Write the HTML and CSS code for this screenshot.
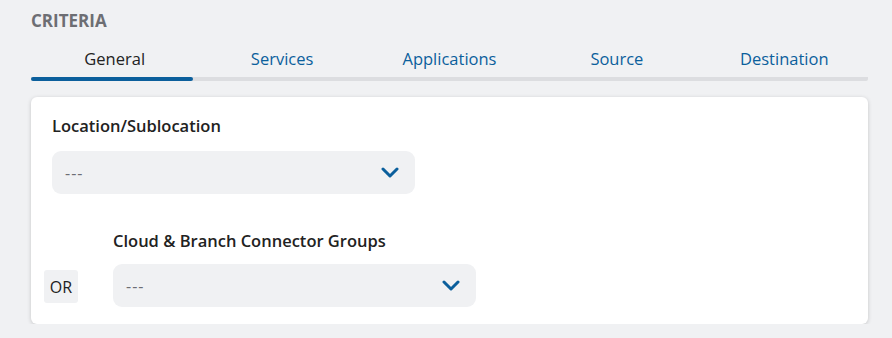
FILE: index.html
```html
<!DOCTYPE html>
<html lang="en">
<head>
    <meta charset="UTF-8">
    <meta name="viewport" content="width=device-width, initial-scale=1.0">
    <title>Criteria</title>
    <link rel="stylesheet" href="styles.css">
</head>
<body>
    <div class="criteria">
        <h2 class="section-title">CRITERIA</h2>
        <div class="tabs">
            <div class="tab active">General</div>
            <div class="tab">Services</div>
            <div class="tab">Applications</div>
            <div class="tab">Source</div>
            <div class="tab">Destination</div>
        </div>
        <div class="card">
            <div class="field">
                <label class="field-label">Location/Sublocation</label>
                <div class="select">
                    <span class="placeholder">---</span>
                    <svg class="chevron" width="18" height="12" viewBox="0 0 18 12"><path d="M2 2l7 7 7-7" fill="none" stroke="#0b5f9c" stroke-width="3" stroke-linecap="round" stroke-linejoin="round"/></svg>
                </div>
            </div>
            <div class="or-row">
                <div class="or-badge">OR</div>
                <div class="field">
                    <label class="field-label">Cloud &amp; Branch Connector Groups</label>
                    <div class="select">
                        <span class="placeholder">---</span>
                        <svg class="chevron" width="18" height="12" viewBox="0 0 18 12"><path d="M2 2l7 7 7-7" fill="none" stroke="#0b5f9c" stroke-width="3" stroke-linecap="round" stroke-linejoin="round"/></svg>
                    </div>
                </div>
            </div>
        </div>
    </div>
</body>
</html>
```

FILE: styles.css
```css
body {
    font-family: "Open Sans", "Noto Sans", sans-serif;
    background-color: #f0f1f3;
    margin: 0;
    color: #222;
}
.criteria {
    padding: 10px 24px 0 31px;
}
.section-title {
    margin: 0;
    font-size: 17px;
    font-weight: 700;
    color: #6d6e73;
    line-height: 22px;
}
.tabs {
    display: grid;
    grid-template-columns: repeat(5, 1fr);
    margin-top: 16px;
    border-bottom: 4px solid #dcdde0;
    border-radius: 2px;
}
.tab {
    position: relative;
    text-align: center;
    font-size: 16.5px;
    color: #0b5f9c;
    line-height: 22px;
    padding-bottom: 7px;
    cursor: pointer;
}
.tab.active {
    color: #222;
}
.tab.active::after {
    content: "";
    position: absolute;
    left: 0;
    right: 5px;
    bottom: -4px;
    height: 4px;
    border-radius: 2px;
    background-color: #0b5f9c;
}
.card {
    margin-top: 16px;
    background-color: #fff;
    border-radius: 6px;
    box-shadow: 0 1px 4px rgba(0, 0, 0, 0.18);
    padding: 17px 21px 17px 13px;
    height: 193px;
}
.field {
    display: flex;
    flex-direction: column;
}
.card > .field {
    padding-left: 8px;
}
.field-label {
    font-size: 16.5px;
    font-weight: 600;
    color: #222;
    line-height: 24px;
    margin-bottom: 13px;
}
.select {
    width: 363px;
    height: 43px;
    box-sizing: border-box;
    background-color: #f0f1f3;
    border-radius: 9px;
    display: flex;
    align-items: center;
    justify-content: space-between;
    padding: 0 16px 0 13px;
}
.placeholder {
    color: #6d6e73;
    font-size: 16px;
    letter-spacing: 1px;
}
.or-row {
    display: flex;
    align-items: flex-end;
    margin-top: 35px;
}
.or-row .field-label {
    margin-bottom: 11px;
}
.or-badge {
    width: 34px;
    height: 33px;
    background-color: #f0f1f3;
    border-radius: 3px;
    display: flex;
    align-items: center;
    justify-content: center;
    font-size: 16px;
    color: #222;
    margin-right: 35px;
    margin-bottom: 4px;
}
```
